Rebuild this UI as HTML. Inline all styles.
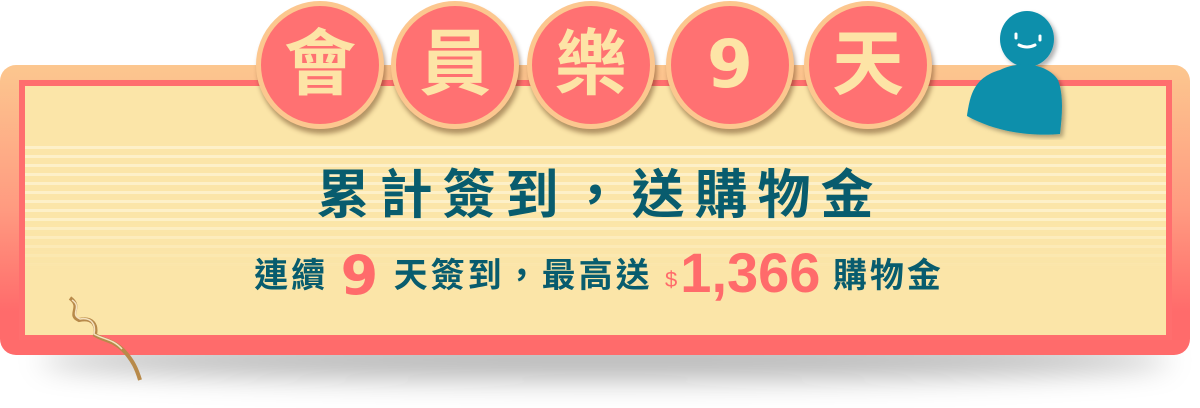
<!DOCTYPE html>
<html><head><meta charset="utf-8"><style>
body{margin:0;width:1200px;height:408px;background:#fff;position:relative;overflow:hidden;font-family:"Liberation Sans","Noto Sans CJK TC",sans-serif}
.shadow{position:absolute;left:40px;top:340px;width:1130px;height:40px;border-radius:50%;background:rgba(0,0,0,.28);filter:blur(14px)}
.frame{position:absolute;left:0;top:65px;width:1190px;height:290px;border-radius:16px;background:linear-gradient(#fcc78f,#ff9a80 50%,#ff6b6b 85%)}
.red{position:absolute;left:19px;top:80px;width:1153px;height:260px;background:#ff6e6e}
.cream{position:absolute;left:25px;top:86px;width:1141px;height:249px;background:#fbe5a8}
.stripes{position:absolute;left:25px;top:140px;width:1141px;height:130px;background:repeating-linear-gradient(#fbe5a8 0 6px,#fdf0c8 6px 9px);-webkit-mask:linear-gradient(#000,#000 60%,transparent);}
.c{position:absolute;top:1px;width:118px;height:118px;border-radius:50%;background:#ff7172;border:5px solid #fcc78f;box-shadow:2px 5px 5px rgba(90,50,20,.45);color:#fde4a6;font-weight:bold;font-size:72px;line-height:118px;text-align:center}
.t{position:absolute;left:0;width:1190px;text-align:center;color:#085c6e;font-weight:bold}
.k{color:#ff6b6b}
</style></head><body>
<div class="shadow"></div>
<div class="frame"></div>
<div class="red"></div>
<div class="cream"></div>
<div class="stripes"></div>
<div class="c" style="left:256px">會</div>
<div class="c" style="left:391px">員</div>
<div class="c" style="left:527px">樂</div>
<div class="c" style="left:666px;font-family:'DejaVu Sans',sans-serif;font-size:66px">9</div>
<div class="c" style="left:804px">天</div>
<svg style="position:absolute;left:960px;top:8px" width="110" height="132">
<defs><filter id="f"><feDropShadow dx="3" dy="3" stdDeviation="2" flood-opacity=".3"/></filter></defs>
<g filter="url(#f)" fill="#0a8fab">
<ellipse cx="67" cy="31" rx="27" ry="28"/>
<path d="M40 62 C60 52 88 56 98 72 C104 88 102 108 100 126 C75 128 40 126 7 108 C10 90 12 70 40 62Z"/>
</g>
<path d="M59 37 q8 4 16 0" stroke="#fff" stroke-width="3" fill="none" stroke-linecap="round"/>
<line x1="56" y1="26" x2="56" y2="30" stroke="#fff" stroke-width="3" stroke-linecap="round"/>
<line x1="80" y1="28" x2="80" y2="32" stroke="#fff" stroke-width="3" stroke-linecap="round"/>
</svg>
<svg style="position:absolute;left:65px;top:295px" width="85" height="90">
<path d="M5 3 C18 12 2 20 14 25 C28 22 32 30 30 40 C40 46 48 45 58 55 C68 65 72 75 75 85" stroke="#b88a4a" stroke-width="4" fill="none"/>
<path d="M7 5 C18 12 4 19 15 24 C27 22 31 30 29 39 C40 45 48 44 57 54" stroke="#f4e2c0" stroke-width="1.5" fill="none"/>
</svg>
<div class="t" style="top:153px;font-size:53px;letter-spacing:10px;left:5px">累計簽到，送購物金</div>
<div class="t" style="top:240px;font-size:34px;letter-spacing:3px;white-space:nowrap;left:4px">連續 <span class="k" style="font-size:54px;font-weight:bold;font-family:'DejaVu Sans',sans-serif;vertical-align:-7px">9</span> 天簽到，最高送 <span class="k" style="font-size:22px;font-weight:normal">$</span><span class="k" style="font-size:56px;vertical-align:-5px;letter-spacing:0">1,366</span> 購物金</div>
</body></html>
